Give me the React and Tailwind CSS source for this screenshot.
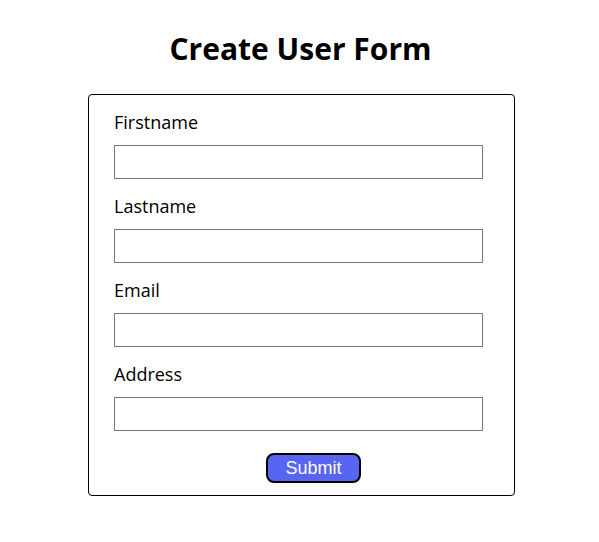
import React, { useState } from 'react';

const fields = [
    { name: 'firstname', label: 'Firstname' },
    { name: 'lastname', label: 'Lastname' },
    { name: 'email', label: 'Email' },
    { name: 'address', label: 'Address' },
];

const App = () => {
    const [form, setForm] = useState({ firstname: '', lastname: '', email: '', address: '' });

    const handleChange = (e) => {
        setForm({ ...form, [e.target.name]: e.target.value });
    };

    return (
        <div className="min-h-screen bg-white flex flex-col items-center pt-[30px] font-['Open_Sans',sans-serif] text-black">
            <h1 className="text-[30px] leading-[38px] font-bold ml-[2px]">Create User Form</h1>
            <form
                onSubmit={(e) => e.preventDefault()}
                className="mt-[26px] ml-[4px] w-[427px] border border-black rounded-[4px] pt-[15px] pb-[12px] pl-[25px] flex flex-col"
            >
                <div className="flex flex-col gap-[15px]">
                    {fields.map((f) => (
                        <div key={f.name} className="flex flex-col">
                            <label htmlFor={f.name} className="text-[18px] leading-[24px]">
                                {f.label}
                            </label>
                            <input
                                id={f.name}
                                name={f.name}
                                value={form[f.name]}
                                onChange={handleChange}
                                className="mt-[11px] w-[369px] h-[34px] border border-[#767676] px-2 outline-none"
                            />
                        </div>
                    ))}
                </div>
                <div className="w-[369px] flex justify-center mt-[22px] pl-[30px]">
                    <button
                        type="submit"
                        className="w-[95px] h-[30px] bg-[#5865f2] text-white border-2 border-black rounded-[8px] text-[18px] leading-none font-['Liberation_Sans',Arial,sans-serif]"
                    >
                        Submit
                    </button>
                </div>
            </form>
        </div>
    );
};

export default App;
